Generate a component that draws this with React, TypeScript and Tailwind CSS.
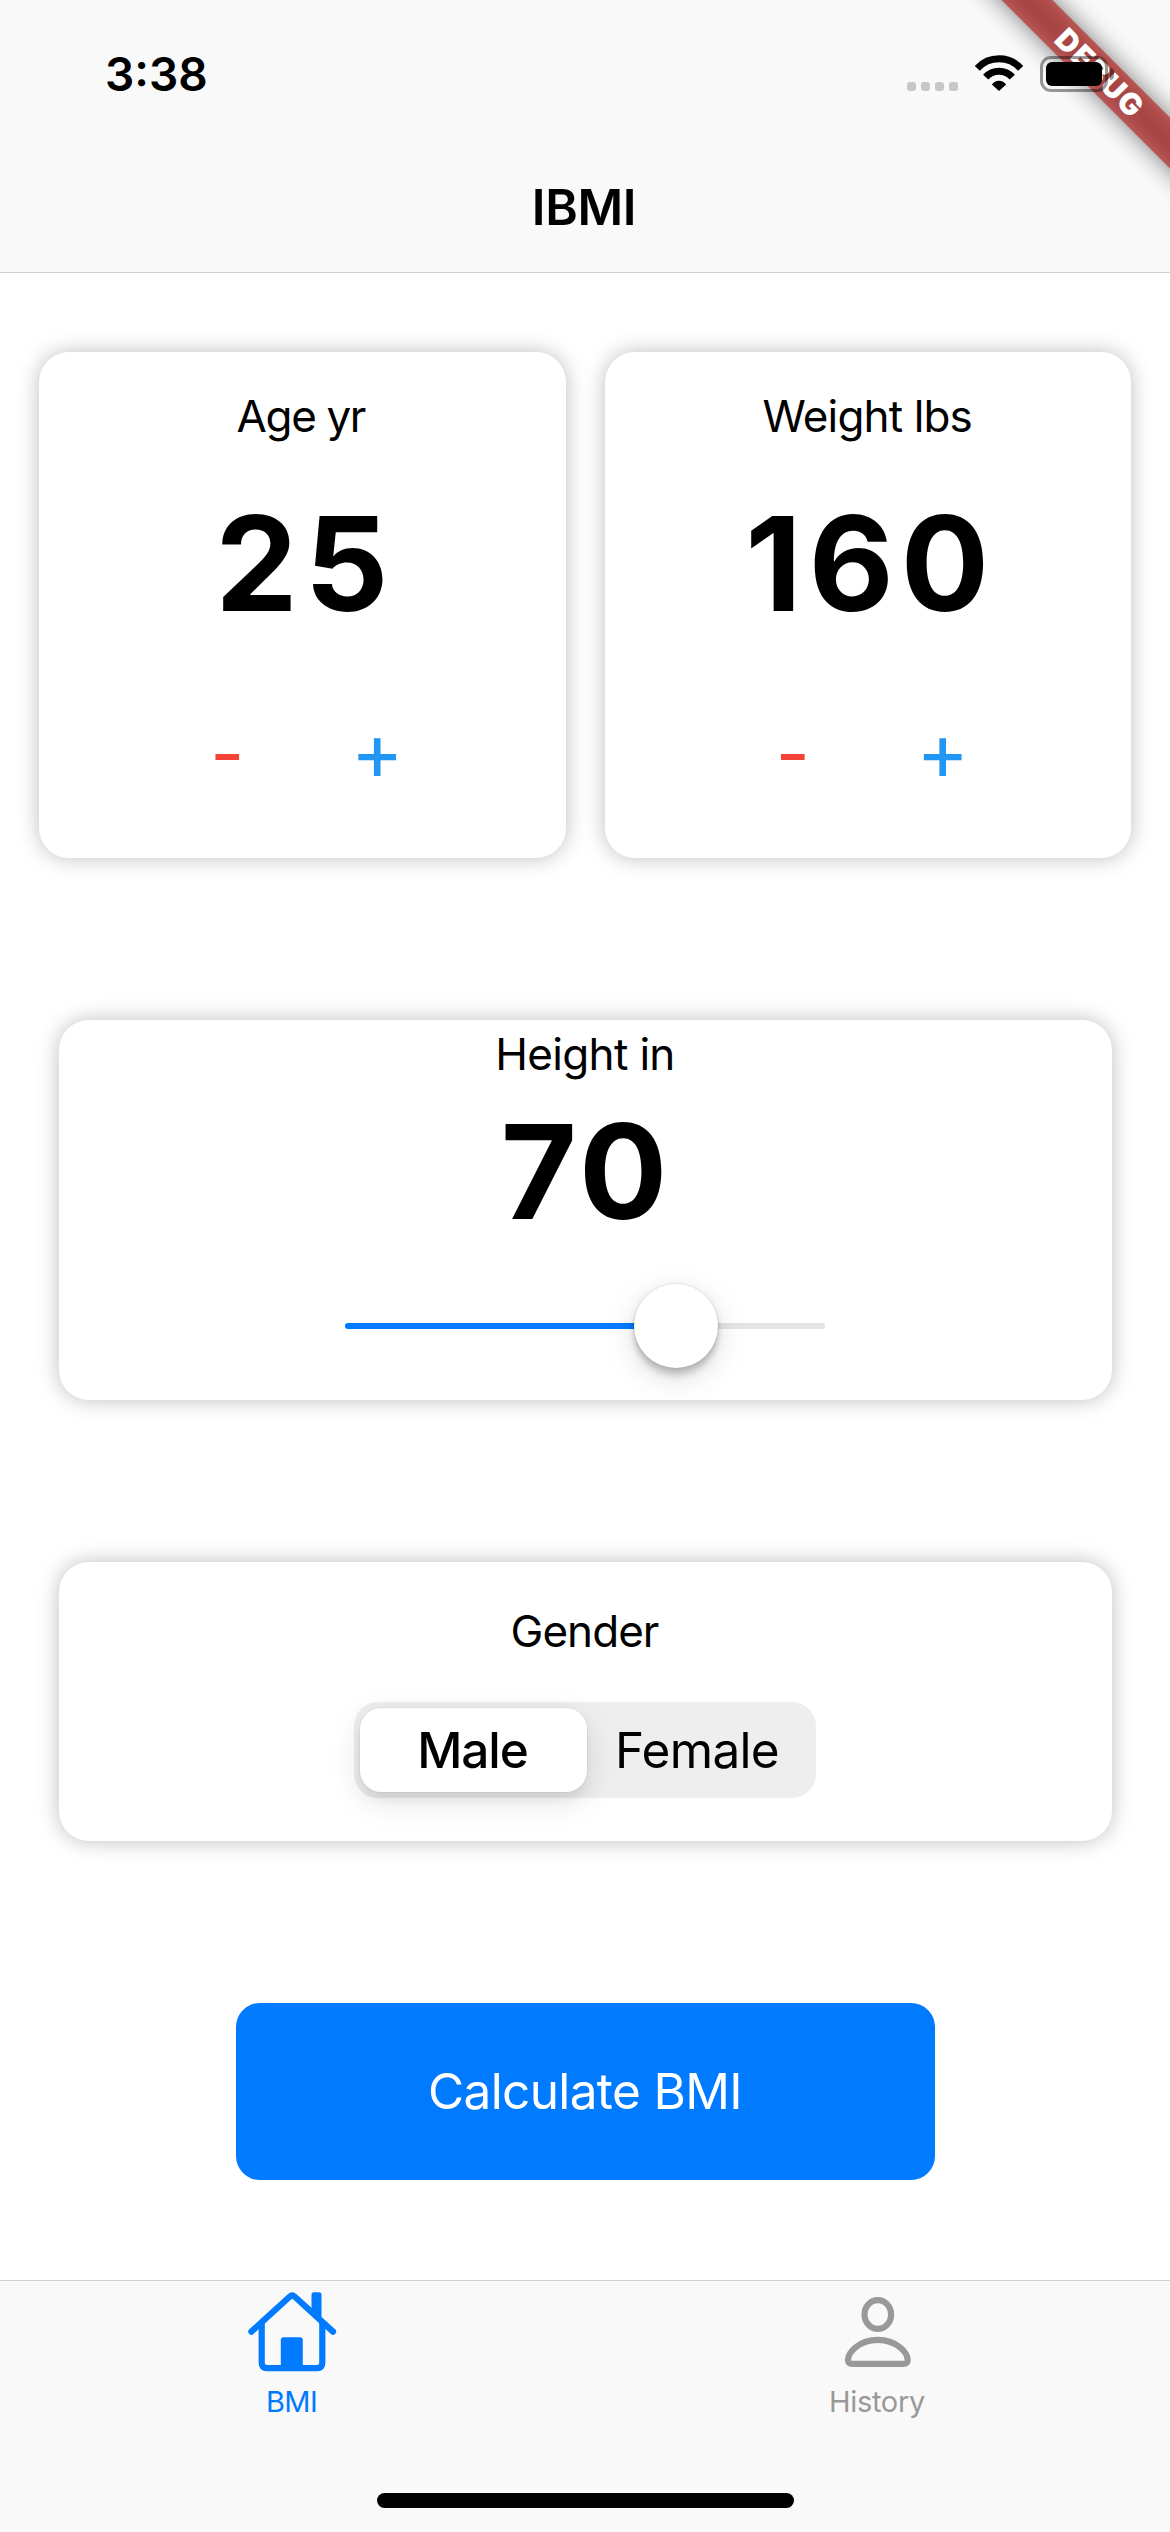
import React from "react";

const CARD = "rounded-[30px] bg-white shadow-[0_0_21px_rgba(0,0,0,0.26)]";

function DebugRibbon() {
  return (
    <div className="absolute left-[899px] top-[54px] h-9 w-[400px] rotate-45">
      <div className="absolute inset-0 bg-black/50 blur-[12px]" />
      <div className="absolute inset-0 flex items-center justify-center bg-[#b71c1c]/63 pl-[3px] text-[30px] leading-9 font-black tracking-[1.5px] text-white">
        DEBUG
      </div>
    </div>
  );
}

function StatusBar() {
  return (
    <div className="relative flex h-[150px] items-start justify-between pr-14 pl-[105px]">
      <span className="text-[46px] leading-[149px] font-semibold">3:38</span>
      <div className="flex items-start">
        <div className="mt-[82px] mr-[17px] flex gap-[5px]">
          {[0, 1, 2, 3].map((dot) => (
            <i key={dot} className="size-[9px] rounded-[3px] bg-[#c7c7c7]" />
          ))}
        </div>
        <svg className="mt-[55px] mr-[17px]" width="48" height="36" viewBox="0 0 48 36" fill="none" stroke="#000" strokeWidth="7">
          <path d="M2.3 13.4A29.3 29.3 0 0 1 45.7 13.4" />
          <path d="M10.7 22.2A17.9 17.9 0 0 1 37.3 22.2" />
          <path d="M16.9 29.6A8.5 8.5 0 0 1 31.1 29.6L24 36Z" fill="#000" stroke="none" />
        </svg>
        <div className="mt-14 flex items-center">
          <div className="h-9 w-[68px] rounded-[11px] border-[3px] border-black/40 p-[3px]">
            <div className="h-full w-full rounded-[6px] bg-black" />
          </div>
          <div className="ml-[2px] h-3 w-1 rounded-r-full bg-black/40" />
        </div>
      </div>
    </div>
  );
}

function Counter({ label, value, labelClass }: { label: string; value: number; labelClass: string }) {
  return (
    <section className={`flex h-[506px] flex-1 flex-col items-center pt-[37px] ${CARD}`}>
      <h2 className={`text-[44px] leading-[54px] ${labelClass}`}>{label}</h2>
      <p className="mt-10 pl-[6px] text-[131px] leading-[161px] font-bold tracking-[7px]">{value}</p>
      <div className="mt-[67px] flex items-baseline text-center leading-[80px]">
        <button className="w-[150px] text-[74px] text-[#f44336]">-</button>
        <button className="w-[150px] text-[80px] text-[#2196f3]">+</button>
      </div>
    </section>
  );
}

function HeightCard() {
  return (
    <section className={`mt-[162px] flex h-[380px] w-[1053px] flex-col items-center pt-[7px] ${CARD}`}>
      <h2 className="text-[44px] leading-[54px] tracking-[-0.67px]">Height in</h2>
      <p className="mt-[10px] pl-[2px] text-[131px] leading-[161px] font-bold tracking-[4px]">70</p>
      <div className="relative mt-8 flex h-[84px] w-[480px] items-center">
        <div className="h-[6px] w-full overflow-hidden rounded-full bg-[#e4e4e5]">
          <div className="h-full w-[331px] bg-[#007aff]" />
        </div>
        <div className="absolute left-[289px] size-[84px] rounded-full bg-white shadow-[0_0_0_1px_rgba(0,0,0,0.04),0_9px_31px_rgba(0,0,0,0.15),0_3px_6px_rgba(0,0,0,0.16),0_9px_6px_rgba(0,0,0,0.1)]" />
      </div>
    </section>
  );
}

function GenderCard() {
  return (
    <section className={`mt-[162px] flex h-[278.5px] w-[1053px] flex-col items-center pt-[42px] ${CARD}`}>
      <h2 className="pr-px text-[44px] leading-[54px] tracking-[-0.96px]">Gender</h2>
      <div className="mt-11 flex h-24 w-[462px] rounded-[24px] bg-[#eeeeef] p-[6px] text-[49.5px] leading-[84px]">
        <button className="w-[227px] rounded-[21px] bg-white pr-[2px] font-medium tracking-[-1.1px] shadow-[0_0_0_1px_rgba(0,0,0,0.04),0_9px_31px_rgba(0,0,0,0.12),0_9px_6px_rgba(0,0,0,0.04)]">
          Male
        </button>
        <button className="w-[220px] tracking-[-0.66px]">Female</button>
      </div>
    </section>
  );
}

function HomeIcon() {
  return (
    <svg width="96" height="96" viewBox="0 0 96 96" fill="none" stroke="currentColor" strokeWidth="6.2" strokeLinecap="round" strokeLinejoin="round">
      <path d="M6.4 47.6L44.6 12.8Q47.2 10.4 49.8 12.8L88 47.6" />
      <path d="M16.7 40V78.8Q16.7 84.2 22.1 84.2H71.9Q77.3 84.2 77.3 78.8V40" />
      <path d="M35.8 84V56.3Q35.8 53.3 38.8 53.3H54.8Q57.8 53.3 57.8 56.3V84Z" fill="currentColor" stroke="none" />
      <path d="M66.5 29V10.8Q66.5 8.3 69 8.3H74Q76.5 8.3 76.5 10.8V38Z" fill="currentColor" stroke="none" />
    </svg>
  );
}

function PersonIcon() {
  return (
    <svg width="96" height="96" viewBox="0 0 96 96" fill="none" stroke="currentColor" strokeWidth="6.2">
      <ellipse cx="47.8" cy="30.5" rx="13.3" ry="14.4" />
      <path d="M22.5 79.8C19.5 79.8 18 78.6 18 76C18 68.5 29 55.8 47.8 55.8C66.6 55.8 77.7 68.5 77.7 76C77.7 78.6 76.2 79.8 73.2 79.8Z" />
    </svg>
  );
}

export default function App() {
  return (
    <div className="relative flex h-[2532px] w-[1170px] flex-col overflow-hidden bg-white font-['Inter',sans-serif] text-black">
      <header className="relative h-[273px] shrink-0 border-b border-[#d0d0d0] bg-[#f9f9f9]">
        <DebugRibbon />
        <StatusBar />
        <h1 className="pr-[2px] text-center text-[49.5px] leading-[114px] font-semibold tracking-[-0.3px]">IBMI</h1>
      </header>

      <main className="flex h-[2007px] shrink-0 flex-col items-center pt-[79px]">
        <div className="flex w-full gap-[39px] px-[39px]">
          <Counter label="Age yr" value={25} labelClass="pr-[3px] tracking-[-1.4px]" />
          <Counter label="Weight lbs" value={160} labelClass="pr-px tracking-[-0.87px]" />
        </div>
        <HeightCard />
        <GenderCard />
        <button className="mt-[162.5px] h-[177px] w-[699px] rounded-[24px] bg-[#007aff] text-[49.5px] tracking-[-0.64px] text-white">
          Calculate BMI
        </button>
      </main>

      <footer className="flex flex-1 flex-col items-center border-t border-[#d0d0d0] bg-[#f9f9f9] pt-[3px]">
        <nav className="grid w-full grid-cols-2 text-[29px] leading-9">
          <a className="flex flex-col items-center gap-1 tracking-[-0.6px] text-[#007aff]">
            <HomeIcon />
            <span className="pr-[2px]">BMI</span>
          </a>
          <a className="flex flex-col items-center gap-1 tracking-[-0.3px] text-[#999999]">
            <PersonIcon />
            <span className="pr-px">History</span>
          </a>
        </nav>
        <div className="mt-auto mb-6 h-[15px] w-[417px] rounded-full bg-black" />
      </footer>
    </div>
  );
}
